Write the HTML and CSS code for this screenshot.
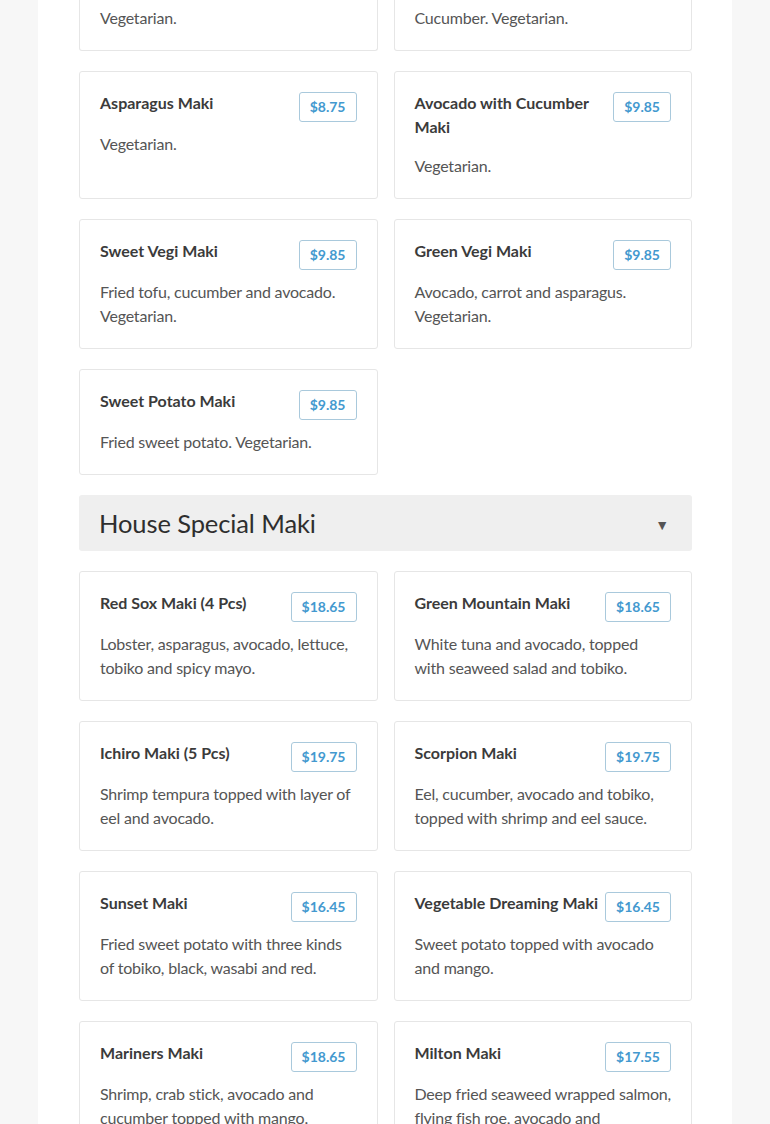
FILE: index.html
```html
<!DOCTYPE html>
<html lang="en">
<head>
<meta charset="utf-8">
<title>Menu</title>
<link rel="stylesheet" href="styles.css">
</head>
<body>
<main class="page">
  <div class="grid">
    <div class="card card-clipped"><p class="desc">Vegetarian.</p></div>
    <div class="card card-clipped"><p class="desc">Cucumber. Vegetarian.</p></div>

    <div class="card">
      <div class="card-head"><h3 class="title">Asparagus Maki</h3><span class="price">$8.75</span></div>
      <p class="desc">Vegetarian.</p>
    </div>
    <div class="card">
      <div class="card-head"><h3 class="title">Avocado with Cucumber Maki</h3><span class="price">$9.85</span></div>
      <p class="desc">Vegetarian.</p>
    </div>

    <div class="card">
      <div class="card-head"><h3 class="title">Sweet Vegi Maki</h3><span class="price">$9.85</span></div>
      <p class="desc">Fried tofu, cucumber and avocado. Vegetarian.</p>
    </div>
    <div class="card">
      <div class="card-head"><h3 class="title">Green Vegi Maki</h3><span class="price">$9.85</span></div>
      <p class="desc">Avocado, carrot and asparagus. Vegetarian.</p>
    </div>

    <div class="card">
      <div class="card-head"><h3 class="title">Sweet Potato Maki</h3><span class="price">$9.85</span></div>
      <p class="desc">Fried sweet potato. Vegetarian.</p>
    </div>
  </div>

  <div class="section-head">
    <h2 class="section-title">House Special Maki</h2>
    <span class="caret">&#9660;</span>
  </div>

  <div class="grid">
    <div class="card">
      <div class="card-head"><h3 class="title">Red Sox Maki (4 Pcs)</h3><span class="price">$18.65</span></div>
      <p class="desc">Lobster, asparagus, avocado, lettuce, tobiko and spicy mayo.</p>
    </div>
    <div class="card">
      <div class="card-head"><h3 class="title">Green Mountain Maki</h3><span class="price">$18.65</span></div>
      <p class="desc">White tuna and avocado, topped with seaweed salad and tobiko.</p>
    </div>

    <div class="card">
      <div class="card-head"><h3 class="title">Ichiro Maki (5 Pcs)</h3><span class="price">$19.75</span></div>
      <p class="desc">Shrimp tempura topped with layer of eel and avocado.</p>
    </div>
    <div class="card">
      <div class="card-head"><h3 class="title">Scorpion Maki</h3><span class="price">$19.75</span></div>
      <p class="desc">Eel, cucumber, avocado and tobiko, topped with shrimp and eel sauce.</p>
    </div>

    <div class="card">
      <div class="card-head"><h3 class="title">Sunset Maki</h3><span class="price">$16.45</span></div>
      <p class="desc">Fried sweet potato with three kinds of tobiko, black, wasabi and red.</p>
    </div>
    <div class="card">
      <div class="card-head"><h3 class="title">Vegetable Dreaming Maki</h3><span class="price">$16.45</span></div>
      <p class="desc">Sweet potato topped with avocado and mango.</p>
    </div>

    <div class="card">
      <div class="card-head"><h3 class="title">Mariners Maki</h3><span class="price">$18.65</span></div>
      <p class="desc">Shrimp, crab stick, avocado and cucumber topped with mango.</p>
    </div>
    <div class="card">
      <div class="card-head"><h3 class="title">Milton Maki</h3><span class="price">$17.55</span></div>
      <p class="desc">Deep fried seaweed wrapped salmon, flying fish roe, avocado and cucumber.</p>
    </div>
  </div>
</main>
</body>
</html>
```

FILE: styles.css
```css
html, body {
  margin: 0;
  padding: 0;
}
body {
  background: #f7f7f7;
  font-family: Lato, "Liberation Sans", sans-serif;
  color: #555;
}
.page {
  width: 694px;
  margin: 0 auto;
  box-sizing: border-box;
  padding: 0 40px 40px 41px;
  background: #fff;
  min-height: 1200px;
}
.grid {
  display: grid;
  grid-template-columns: 1fr 1fr;
  column-gap: 16px;
  row-gap: 20px;
}
.card {
  border: 1px solid #e6e6e6;
  border-radius: 3px;
  padding: 19px 20px 20px;
  background: #fff;
  min-width: 0;
}
.card-clipped {
  border-top: none;
  border-top-left-radius: 0;
  border-top-right-radius: 0;
  padding-top: 6px;
}
.card-head {
  display: flex;
  justify-content: space-between;
  align-items: flex-start;
  gap: 4px;
  margin-bottom: 10px;
}
.title {
  margin: 0 0 5px;
  font-size: 16px;
  line-height: 24px;
  font-weight: 700;
  color: #3b3b3b;
}
.price {
  flex: none;
  box-sizing: border-box;
  height: 30px;
  margin-top: 1px;
  line-height: 28px;
  padding: 0 10px;
  border: 1px solid #a9c9dc;
  border-radius: 3px;
  font-size: 14px;
  font-weight: 700;
  color: #4399cf;
}
.desc {
  margin: 0;
  font-size: 16px;
  line-height: 24px;
  letter-spacing: -0.2px;
  color: #555;
}
.section-head {
  display: flex;
  align-items: center;
  justify-content: space-between;
  height: 56px;
  box-sizing: border-box;
  padding: 0 23px 0 20px;
  margin: 20px 0;
  background: #efefef;
  border-radius: 3px;
}
.section-title {
  margin: 0;
  font-size: 25.5px;
  font-weight: 400;
  letter-spacing: -0.1px;
  color: #2e2e2e;
}
.caret {
  font-size: 14px;
  color: #555;
  margin-top: 2px;
}
```
